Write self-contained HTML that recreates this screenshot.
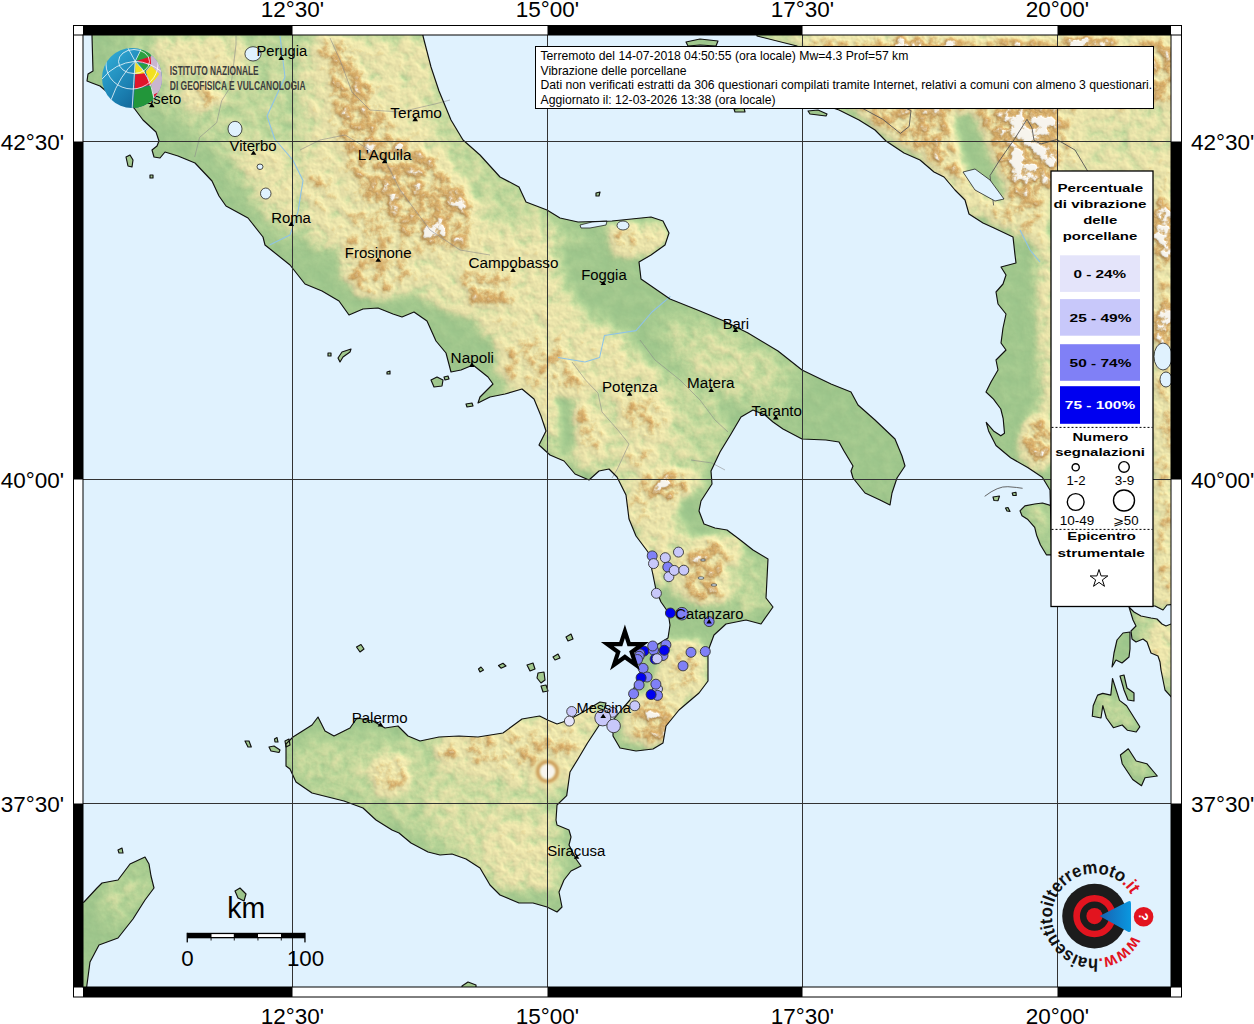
<!DOCTYPE html>
<html><head><meta charset="utf-8">
<style>
html,body{margin:0;padding:0;background:#fff;width:1254px;height:1024px;overflow:hidden;}
svg{display:block;font-family:"Liberation Sans",sans-serif;}
</style></head>
<body>
<svg width="1254" height="1024" viewBox="0 0 1254 1024">
<defs>
<clipPath id="landclip">
<polygon points="92,30 92,36 93,71 88,74 87,81 92,83 100,86 112,96 125,103 134,108 143,120 156,132 159,141 157,146 152,150 154,157 160,158 165,152 178,156 195,163 212,181 219,196 226,206 248,218 263,237 265,245 290,265 305,284 322,291 339,301 349,315 363,309 378,308 393,314 402,317 414,312 427,321 436,341 446,353 451,372 461,370 473,365 488,377 493,384 480,397 478,403 490,397 505,394 522,389 534,399 541,416 546,431 539,445 550,455 564,461 575,474 589,480 599,471 609,469 617,477 626,495 629,519 636,536 648,552 653,575 656,590 661,602 668,612 670,625 668,638 655,646 643,652 640,660 640,673 634,688 630,700 623,708 613,720 613,736 620,748 636,751 653,749 663,743 666,726 679,710 699,693 708,681 708,651 714,635 726,624 746,620 761,624 773,607 766,598 768,559 753,550 739,539 727,530 715,528 704,524 699,511 701,501 712,484 711,471 720,452 731,434 741,417 753,410 765,415 773,422 783,429 802,439 826,440 839,442 844,451 853,466 851,471 853,478 865,493 880,500 890,505 892,493 897,478 905,466 902,456 895,439 875,420 858,405 851,392 831,384 802,370 778,351 748,333 724,321 700,311 670,299 641,279 639,262 651,255 665,245 669,233 663,221 651,217 612,221 578,222 560,218 547,210 526,202 519,187 500,177 480,155 463,140 451,120 439,91 431,67 423,36 422,30"/>
<polygon points="286,744 293,737 312,725 318,717 325,731 334,736 350,728 357,718 373,721 385,728 398,726 408,736 420,741 439,737 459,736 478,737 503,733 522,719 539.6,716 547.6,720 557,724 566.7,720.7 579.5,714 600,702 606,703 600,724 587.5,743 578,759 570,772 566.7,795.7 557,805 556,820 557,825 569,830 571,837 569,845 576,859 581,866 571,871 564,880 559,892 562,907 557,912 547,907 533,903 519,903 500,895 490,885 480,868 466,859 452,854 440,855 428,852 411,843 399,833 392,830 376,820 363,808 344,801 312,793 296,782 290,769 286,766"/>
<polygon points="757,30 757,36 797,46 815,70 833,108 839,110 859,120 875,130 886,141 904,153 920,160 934,172 944,177 955,190 965,200 969,214 983,223 994,228 1013,237 1015,255 1016,263 1001,267 1006,275 1003,284 996,292 998,304 1006,314 1003,328 1001,343 1006,350 996,360 998,370 991,382 986,392 993.5,399.2 1000.8,409 1003.2,418.7 1004.5,433.3 1000.8,435.8 993.5,430.9 986.2,422.4 988.6,430.9 996,445.5 1010.6,457.8 1027.7,467.5 1042.3,477.3 1050,490 1052,560 1052,606 1155,606 1163,610 1167,605 1176,604 1176,30"/>
<polygon points="1129,607 1134,612 1141,616 1151,618 1157,619 1162,624 1166,626 1176,622 1176,702 1165,690 1161,670 1160,662 1158,656 1151,653 1147,642 1143,639 1136,642 1132,639 1131,631 1136,626 1133,620"/>
<polygon points="78,904 84,902 97,888 102,883 118,880 130,864 145,857 149,864 151,876 154,888 145,900 133,919 118,938 99,945 90,962 86,992 78,992"/>
<polygon points="126,157 130,155 133,160 132,167 128,166"/>
<polygon points="150,175 153,175 153,178 150,178"/>
<polygon points="338,358 342,352 351,349 350,352 343,357 340,362"/>
<polygon points="387,372 390,371 390,374 387,374"/>
<polygon points="431,380 437,377 443,380 442,386 434,387"/>
<polygon points="466,404 472,403 473,406 467,407"/>
<polygon points="566,637 571,634 573,639 568,641"/>
<polygon points="553,657 558,654 560,658 555,660"/>
<polygon points="527,665 533,663 535,669 530,671"/>
<polygon points="538,673 544,672 545,680 541,683 537,678"/>
<polygon points="541,686 546,685 548,691 543,692"/>
<polygon points="285,741 289,739 290,745 286,747"/>
<polygon points="235,891 240,888 246,894 244,901 238,898"/>
<polygon points="462,986 468,982 476,985 476,992 462,992"/>
<polygon points="596,193 600,192 599,196 596,196"/>
<polygon points="1020,510.8 1024.9,505.9 1034.7,504 1042.5,503 1052,505.9 1052,554.8 1046.4,554.8 1040.5,545 1036.6,535.2 1034.7,527.4 1027.9,519.6 1022,515.7"/>
<polygon points="1123,633 1130,632 1130,649 1129,657 1122,663 1116,660 1112,667 1114,653 1117,640"/>
<polygon points="1112.5,678.5 1119.5,700.4 1126.6,705.7 1139.8,726.8 1136.2,732 1127.5,730.3 1122.2,725 1113.4,727.7 1106.4,718 1102.8,705.7 1101,718 1092.3,716.2 1093.2,705.7 1097.6,695.1 1102.8,693.4 1110.8,695.1"/>
<polygon points="1120,676 1124,675 1127,688 1134,693 1134,701 1128,700 1124,690"/>
<polygon points="1120.4,755 1128.3,748.8 1136.2,761 1146.8,763.7 1157.3,776 1145,777.8 1141.5,785.7 1132.7,779.5 1122.2,763.7"/>
<polygon points="686,42 700,39 718,41 716,46 700,45 688,46"/>
<polygon points="118,850 122,848 123,853 119,853"/>
<polygon points="328,353 331,353 331,356 328,356"/>
<polygon points="444,377 448,376 449,379 445,380"/>
<polygon points="245,741 249,741 251.3,747 248,747"/>
<polygon points="356.5,647 361,644.5 364,649 360,652"/>
<polygon points="478.5,669 481,667 483.5,670 480,672"/>
<polygon points="498.5,665.5 503,663.3 506,666 501,668.2"/>
<polygon points="274.5,739 277,737.5 278,742 275,742"/>
<polygon points="269,747 274,746 280,750 279,752.5 271,751"/>
<polygon points="993,497 999.5,496 998,500.7 994,500.5"/>
<polygon points="1012.2,493 1016,492.3 1016.2,495.5 1013,495.5"/>
<polygon points="1005.5,508 1008,507.5 1010,511.5 1007,511"/>
<polygon points="734,109 744,108 745,112 735,112"/>
<polygon points="808,111 818,110 827,114 826,116 810,114"/>
</clipPath>
<filter id="b1" x="-50%" y="-50%" width="200%" height="200%" color-interpolation-filters="sRGB"><feGaussianBlur stdDeviation="1"/></filter>
<filter id="b2" x="-50%" y="-50%" width="200%" height="200%" color-interpolation-filters="sRGB"><feGaussianBlur stdDeviation="2"/></filter>
<filter id="b3" x="-50%" y="-50%" width="200%" height="200%" color-interpolation-filters="sRGB"><feGaussianBlur stdDeviation="3"/></filter>
<filter id="b4" x="-50%" y="-50%" width="200%" height="200%" color-interpolation-filters="sRGB"><feGaussianBlur stdDeviation="4"/></filter>
<filter id="b5" x="-50%" y="-50%" width="200%" height="200%" color-interpolation-filters="sRGB"><feGaussianBlur stdDeviation="5"/></filter>
<filter id="b6" x="-50%" y="-50%" width="200%" height="200%" color-interpolation-filters="sRGB"><feGaussianBlur stdDeviation="6"/></filter>
<filter id="b7" x="-50%" y="-50%" width="200%" height="200%" color-interpolation-filters="sRGB"><feGaussianBlur stdDeviation="7"/></filter>
<filter id="b8" x="-50%" y="-50%" width="200%" height="200%" color-interpolation-filters="sRGB"><feGaussianBlur stdDeviation="8"/></filter>
<filter id="b10" x="-50%" y="-50%" width="200%" height="200%" color-interpolation-filters="sRGB"><feGaussianBlur stdDeviation="10"/></filter>
<filter id="b12" x="-50%" y="-50%" width="200%" height="200%" color-interpolation-filters="sRGB"><feGaussianBlur stdDeviation="12"/></filter>
<filter id="b15" x="-50%" y="-50%" width="200%" height="200%" color-interpolation-filters="sRGB"><feGaussianBlur stdDeviation="15"/></filter>
<filter id="hyp" filterUnits="userSpaceOnUse" x="83" y="35" width="1088" height="952" color-interpolation-filters="sRGB">
<feTurbulence type="fractalNoise" baseFrequency="0.085" numOctaves="4" seed="5" result="n0"/>
<feColorMatrix in="n0" type="matrix" values="1 0 0 0 0 1 0 0 0 0 1 0 0 0 0 0 0 0 0 1" result="n"/>
<feComposite in="SourceGraphic" in2="n" operator="arithmetic" k1="1.2" k2="0.4" k3="0" k4="0" result="e"/>
<feColorMatrix in="e" type="matrix" values="0 0 0 0 1 0 0 0 0 1 0 0 0 0 1 1 0 0 0 0" result="ea"/>
<feDiffuseLighting in="ea" surfaceScale="3" diffuseConstant="1" lighting-color="#fff" result="sh"><feDistantLight azimuth="315" elevation="45"/></feDiffuseLighting>
<feComponentTransfer in="e"><feFuncR type="table" tableValues="0.592 0.620 0.690 0.784 0.867 0.922 0.925 0.902 0.859 0.820 0.851 0.969"/><feFuncG type="table" tableValues="0.761 0.776 0.816 0.855 0.878 0.894 0.898 0.839 0.733 0.651 0.733 0.957"/><feFuncB type="table" tableValues="0.541 0.549 0.580 0.620 0.651 0.671 0.675 0.596 0.482 0.384 0.533 0.933"/><feFuncA type="linear" slope="0" intercept="1"/></feComponentTransfer>
<feComposite in2="sh" operator="arithmetic" k1="0.32" k2="0.774" k3="0" k4="0" result="c2"/>
<feColorMatrix in="c2" type="matrix" values="1 0 0 0 0 0 1 0 0 0 0 0 1 0 0 0 0 0 0 1"/>
</filter>
<clipPath id="mapclip"><rect x="83" y="35" width="1088" height="952"/></clipPath>
</defs>
<rect width="1254" height="1024" fill="#fff"/>
<g clip-path="url(#mapclip)">
<rect x="83" y="35" width="1088" height="952" fill="#e0f2fe"/>
<g fill="#a9cf95">
<polygon points="92,30 92,36 93,71 88,74 87,81 92,83 100,86 112,96 125,103 134,108 143,120 156,132 159,141 157,146 152,150 154,157 160,158 165,152 178,156 195,163 212,181 219,196 226,206 248,218 263,237 265,245 290,265 305,284 322,291 339,301 349,315 363,309 378,308 393,314 402,317 414,312 427,321 436,341 446,353 451,372 461,370 473,365 488,377 493,384 480,397 478,403 490,397 505,394 522,389 534,399 541,416 546,431 539,445 550,455 564,461 575,474 589,480 599,471 609,469 617,477 626,495 629,519 636,536 648,552 653,575 656,590 661,602 668,612 670,625 668,638 655,646 643,652 640,660 640,673 634,688 630,700 623,708 613,720 613,736 620,748 636,751 653,749 663,743 666,726 679,710 699,693 708,681 708,651 714,635 726,624 746,620 761,624 773,607 766,598 768,559 753,550 739,539 727,530 715,528 704,524 699,511 701,501 712,484 711,471 720,452 731,434 741,417 753,410 765,415 773,422 783,429 802,439 826,440 839,442 844,451 853,466 851,471 853,478 865,493 880,500 890,505 892,493 897,478 905,466 902,456 895,439 875,420 858,405 851,392 831,384 802,370 778,351 748,333 724,321 700,311 670,299 641,279 639,262 651,255 665,245 669,233 663,221 651,217 612,221 578,222 560,218 547,210 526,202 519,187 500,177 480,155 463,140 451,120 439,91 431,67 423,36 422,30"/>
<polygon points="286,744 293,737 312,725 318,717 325,731 334,736 350,728 357,718 373,721 385,728 398,726 408,736 420,741 439,737 459,736 478,737 503,733 522,719 539.6,716 547.6,720 557,724 566.7,720.7 579.5,714 600,702 606,703 600,724 587.5,743 578,759 570,772 566.7,795.7 557,805 556,820 557,825 569,830 571,837 569,845 576,859 581,866 571,871 564,880 559,892 562,907 557,912 547,907 533,903 519,903 500,895 490,885 480,868 466,859 452,854 440,855 428,852 411,843 399,833 392,830 376,820 363,808 344,801 312,793 296,782 290,769 286,766"/>
<polygon points="757,30 757,36 797,46 815,70 833,108 839,110 859,120 875,130 886,141 904,153 920,160 934,172 944,177 955,190 965,200 969,214 983,223 994,228 1013,237 1015,255 1016,263 1001,267 1006,275 1003,284 996,292 998,304 1006,314 1003,328 1001,343 1006,350 996,360 998,370 991,382 986,392 993.5,399.2 1000.8,409 1003.2,418.7 1004.5,433.3 1000.8,435.8 993.5,430.9 986.2,422.4 988.6,430.9 996,445.5 1010.6,457.8 1027.7,467.5 1042.3,477.3 1050,490 1052,560 1052,606 1155,606 1163,610 1167,605 1176,604 1176,30"/>
<polygon points="1129,607 1134,612 1141,616 1151,618 1157,619 1162,624 1166,626 1176,622 1176,702 1165,690 1161,670 1160,662 1158,656 1151,653 1147,642 1143,639 1136,642 1132,639 1131,631 1136,626 1133,620"/>
<polygon points="78,904 84,902 97,888 102,883 118,880 130,864 145,857 149,864 151,876 154,888 145,900 133,919 118,938 99,945 90,962 86,992 78,992"/>
<polygon points="126,157 130,155 133,160 132,167 128,166"/>
<polygon points="150,175 153,175 153,178 150,178"/>
<polygon points="338,358 342,352 351,349 350,352 343,357 340,362"/>
<polygon points="387,372 390,371 390,374 387,374"/>
<polygon points="431,380 437,377 443,380 442,386 434,387"/>
<polygon points="466,404 472,403 473,406 467,407"/>
<polygon points="566,637 571,634 573,639 568,641"/>
<polygon points="553,657 558,654 560,658 555,660"/>
<polygon points="527,665 533,663 535,669 530,671"/>
<polygon points="538,673 544,672 545,680 541,683 537,678"/>
<polygon points="541,686 546,685 548,691 543,692"/>
<polygon points="285,741 289,739 290,745 286,747"/>
<polygon points="235,891 240,888 246,894 244,901 238,898"/>
<polygon points="462,986 468,982 476,985 476,992 462,992"/>
<polygon points="596,193 600,192 599,196 596,196"/>
<polygon points="1020,510.8 1024.9,505.9 1034.7,504 1042.5,503 1052,505.9 1052,554.8 1046.4,554.8 1040.5,545 1036.6,535.2 1034.7,527.4 1027.9,519.6 1022,515.7"/>
<polygon points="1123,633 1130,632 1130,649 1129,657 1122,663 1116,660 1112,667 1114,653 1117,640"/>
<polygon points="1112.5,678.5 1119.5,700.4 1126.6,705.7 1139.8,726.8 1136.2,732 1127.5,730.3 1122.2,725 1113.4,727.7 1106.4,718 1102.8,705.7 1101,718 1092.3,716.2 1093.2,705.7 1097.6,695.1 1102.8,693.4 1110.8,695.1"/>
<polygon points="1120,676 1124,675 1127,688 1134,693 1134,701 1128,700 1124,690"/>
<polygon points="1120.4,755 1128.3,748.8 1136.2,761 1146.8,763.7 1157.3,776 1145,777.8 1141.5,785.7 1132.7,779.5 1122.2,763.7"/>
<polygon points="686,42 700,39 718,41 716,46 700,45 688,46"/>
<polygon points="118,850 122,848 123,853 119,853"/>
<polygon points="328,353 331,353 331,356 328,356"/>
<polygon points="444,377 448,376 449,379 445,380"/>
<polygon points="245,741 249,741 251.3,747 248,747"/>
<polygon points="356.5,647 361,644.5 364,649 360,652"/>
<polygon points="478.5,669 481,667 483.5,670 480,672"/>
<polygon points="498.5,665.5 503,663.3 506,666 501,668.2"/>
<polygon points="274.5,739 277,737.5 278,742 275,742"/>
<polygon points="269,747 274,746 280,750 279,752.5 271,751"/>
<polygon points="993,497 999.5,496 998,500.7 994,500.5"/>
<polygon points="1012.2,493 1016,492.3 1016.2,495.5 1013,495.5"/>
<polygon points="1005.5,508 1008,507.5 1010,511.5 1007,511"/>
<polygon points="734,109 744,108 745,112 735,112"/>
<polygon points="808,111 818,110 827,114 826,116 810,114"/>
</g>
<g clip-path="url(#landclip)">
<g filter="url(#hyp)"><rect x="83" y="35" width="1088" height="952" fill="#1a1a1a"/><polygon fill="rgb(64,64,64)" filter="url(#b10)" points="120,40 292,36 300,120 300,250 265,225 230,170 190,130 150,105 125,80"/>
<polygon fill="rgb(115,115,115)" filter="url(#b6)" points="150,40 240,38 250,70 220,85 170,75"/>
<ellipse fill="rgb(158,158,158)" filter="url(#b4)" cx="202.0" cy="97.0" rx="20.0" ry="13.0"/>
<polygon fill="rgb(115,115,115)" filter="url(#b8)" points="230,140 292,150 300,230 270,215 245,175"/>
<polygon fill="rgb(115,115,115)" filter="url(#b8)" points="300,36 430,36 445,95 470,150 505,190 545,220 580,245 605,310 640,360 690,392 722,445 718,500 682,545 645,522 612,475 565,462 522,412 500,380 468,338 430,302 372,272 335,238 312,185 302,120"/>
<polygon fill="rgb(64,64,64)" filter="url(#b10)" points="430,50 470,130 520,190 560,230 500,230 460,190 430,120"/>
<polygon fill="rgb(158,158,158)" filter="url(#b5)" points="318,40 352,40 366,88 394,132 442,158 474,200 476,252 440,256 398,240 360,206 344,162 328,100"/>
<polygon fill="rgb(186,186,186)" filter="url(#b4)" points="330,45 348,45 360,88 388,130 435,160 466,205 466,245 440,245 402,230 368,198 350,160 336,100"/>
<ellipse fill="rgb(245,245,245)" filter="url(#b3)" cx="367.0" cy="88.0" rx="4.0" ry="6.0"/>
<ellipse fill="rgb(245,245,245)" filter="url(#b3)" cx="383.0" cy="117.0" rx="3.0" ry="4.0"/>
<ellipse fill="rgb(245,245,245)" filter="url(#b3)" cx="396.0" cy="148.0" rx="8.0" ry="5.0"/>
<ellipse fill="rgb(245,245,245)" filter="url(#b3)" cx="388.0" cy="185.0" rx="6.0" ry="6.0"/>
<ellipse fill="rgb(245,245,245)" filter="url(#b3)" cx="457.0" cy="198.0" rx="5.0" ry="10.0"/>
<ellipse fill="rgb(245,245,245)" filter="url(#b3)" cx="433.0" cy="232.0" rx="13.0" ry="8.0"/>
<polygon fill="rgb(115,115,115)" filter="url(#b6)" points="298,140 340,150 352,240 322,255 300,225"/>
<ellipse fill="rgb(158,158,158)" filter="url(#b4)" cx="320.0" cy="186.5" rx="12.0" ry="18.5"/>
<ellipse fill="rgb(158,158,158)" filter="url(#b4)" cx="362.0" cy="231.0" rx="20.0" ry="21.0"/>
<ellipse fill="rgb(158,158,158)" filter="url(#b4)" cx="377.5" cy="264.0" rx="37.5" ry="36.0"/>
<polygon fill="rgb(158,158,158)" filter="url(#b4)" points="462,268 512,270 515,305 465,308"/>
<ellipse fill="rgb(186,186,186)" filter="url(#b3)" cx="487.5" cy="287.5" rx="17.5" ry="12.5"/>
<ellipse fill="rgb(158,158,158)" filter="url(#b4)" cx="537.5" cy="361.5" rx="37.5" ry="24.5"/>
<polygon fill="rgb(26,26,26)" filter="url(#b6)" points="424,309 470,318 497,350 490,378 450,374 430,340"/>
<polygon fill="rgb(26,26,26)" filter="url(#b8)" points="555,232 640,262 672,300 650,332 585,320 560,280"/>
<polygon fill="rgb(115,115,115)" filter="url(#b4)" points="602,226 662,222 668,242 648,258 616,258"/>
<ellipse fill="rgb(158,158,158)" filter="url(#b4)" cx="630.0" cy="239.0" rx="20.0" ry="11.0"/>
<polygon fill="rgb(64,64,64)" filter="url(#b10)" points="655,312 700,318 780,352 800,372 780,415 745,405 700,392 665,352"/>
<polygon fill="rgb(84,84,84)" filter="url(#b10)" points="680,330 740,345 770,370 750,395 700,380"/>
<polygon fill="rgb(84,84,84)" filter="url(#b8)" points="560,382 700,392 722,445 705,490 650,470 600,470 560,445"/>
<polygon fill="rgb(26,26,26)" filter="url(#b4)" points="558,393 574,395 577,430 570,457 558,450"/>
<polygon fill="rgb(158,158,158)" filter="url(#b4)" points="572,402 590,405 606,440 600,458 585,455 575,430"/>
<polygon fill="rgb(158,158,158)" filter="url(#b4)" points="615,395 650,393 672,410 665,437 640,440 620,425"/>
<ellipse fill="rgb(158,158,158)" filter="url(#b4)" cx="640.0" cy="456.5" rx="16.0" ry="10.5"/>
<ellipse fill="rgb(158,158,158)" filter="url(#b4)" cx="569.0" cy="382.5" rx="21.0" ry="12.5"/>
<ellipse fill="rgb(186,186,186)" filter="url(#b4)" cx="665.0" cy="486.5" rx="25.0" ry="18.5"/>
<ellipse fill="rgb(158,158,158)" filter="url(#b4)" cx="645.0" cy="507.0" rx="21.0" ry="19.0"/>
<ellipse fill="rgb(245,245,245)" filter="url(#b3)" cx="665.5" cy="488.0" rx="10.5" ry="8.0"/>
<polygon fill="rgb(26,26,26)" filter="url(#b5)" points="702,470 730,440 745,532 712,526"/>
<polygon fill="rgb(64,64,64)" filter="url(#b6)" points="660,380 720,400 730,450 700,470 680,420"/>
<polygon fill="rgb(115,115,115)" filter="url(#b4)" points="630,500 665,500 672,570 660,592 642,560"/>
<ellipse fill="rgb(158,158,158)" filter="url(#b3)" cx="648.0" cy="512.0" rx="12.0" ry="12.0"/>
<polygon fill="rgb(115,115,115)" filter="url(#b5)" points="668,530 742,538 748,600 700,608 670,592"/>
<ellipse fill="rgb(186,186,186)" filter="url(#b5)" cx="708.0" cy="571.0" rx="26.0" ry="31.0"/>
<polygon fill="rgb(64,64,64)" filter="url(#b6)" points="726,561 768,560 770,605 740,620 726,600"/>
<polygon fill="rgb(26,26,26)" filter="url(#b4)" points="660,603 700,610 720,626 700,640 668,636"/>
<polygon fill="rgb(115,115,115)" filter="url(#b4)" points="665,640 702,640 707,690 682,708 652,748 622,742 622,702 650,690"/>
<ellipse fill="rgb(158,158,158)" filter="url(#b4)" cx="685.0" cy="668.5" rx="17.0" ry="23.5"/>
<ellipse fill="rgb(186,186,186)" filter="url(#b4)" cx="656.0" cy="722.0" rx="26.0" ry="22.0"/>
<ellipse fill="rgb(245,245,245)" filter="url(#b2)" cx="652.0" cy="717.0" rx="8.0" ry="7.0"/>
<polygon fill="rgb(26,26,26)" filter="url(#b5)" points="678,498 706,488 716,530 692,540 676,522"/>
<polygon fill="rgb(64,64,64)" filter="url(#b10)" points="290,740 430,735 560,790 570,900 480,880 380,815 290,785"/>
<polygon fill="rgb(115,115,115)" filter="url(#b6)" points="436,732 600,706 600,730 582,768 560,792 520,790 470,780 440,770"/>
<polygon fill="rgb(158,158,158)" filter="url(#b4)" points="460,736 568,728 578,750 560,768 520,766 468,762"/>
<ellipse fill="rgb(158,158,158)" filter="url(#b4)" cx="390.0" cy="775.0" rx="20.0" ry="20.0"/>
<polygon fill="rgb(87,87,87)" filter="url(#b8)" points="420,780 540,792 552,870 500,890 440,840"/>
<polygon fill="rgb(115,115,115)" filter="url(#b6)" points="487,824 551,824 551,887 500,887"/>
<ellipse fill="rgb(158,158,158)" filter="url(#b3)" cx="449.0" cy="753.0" rx="13.0" ry="9.0"/>
<ellipse fill="rgb(245,245,245)" filter="url(#b2)" cx="449.0" cy="753.0" rx="3.0" ry="3.0"/>
<polygon fill="rgb(158,158,158)" filter="url(#b6)" points="757,36 1176,36 1176,606 1152,606 1152,170 1050,170 1045,250 1032,240 1012,236 990,222 965,196 935,170 895,148 850,108 800,52"/>
<polygon fill="rgb(186,186,186)" filter="url(#b6)" points="800,40 1176,40 1176,100 1060,108 1060,190 1010,212 965,185 905,145 855,104"/>
<polygon fill="rgb(51,51,51)" filter="url(#b4)" points="757,36 790,36 830,70 850,110 890,138 930,162 920,170 880,150 838,118 800,55"/>
<ellipse fill="rgb(245,245,245)" filter="url(#b4)" cx="1025.5" cy="125.0" rx="30.5" ry="20.0"/>
<ellipse fill="rgb(245,245,245)" filter="url(#b4)" cx="1030.5" cy="162.0" rx="25.5" ry="20.0"/>
<ellipse fill="rgb(245,245,245)" filter="url(#b4)" cx="920.0" cy="50.0" rx="40.0" ry="12.0"/>
<ellipse fill="rgb(245,245,245)" filter="url(#b4)" cx="1085.0" cy="49.0" rx="25.0" ry="11.0"/>
<ellipse fill="rgb(245,245,245)" filter="url(#b4)" cx="1164.0" cy="230.0" rx="12.0" ry="30.0"/>
<ellipse fill="rgb(245,245,245)" filter="url(#b4)" cx="1164.0" cy="322.5" rx="12.0" ry="22.5"/>
<polygon fill="rgb(97,97,97)" filter="url(#b10)" points="1075,108 1176,104 1176,170 1075,175"/>
<polygon fill="rgb(26,26,26)" filter="url(#b5)" points="951,114 972,110 997,167 1008,200 994,207 965,174 955,144"/>
<polygon fill="rgb(115,115,115)" filter="url(#b4)" points="934,174 960,180 985,215 965,214 945,195"/>
<polygon fill="rgb(26,26,26)" filter="url(#b6)" points="990,225 1035,250 1040,420 1000,440 985,300"/>
<polygon fill="rgb(115,115,115)" filter="url(#b6)" points="1035,240 1055,240 1055,420 1040,420"/>
<ellipse fill="rgb(186,186,186)" filter="url(#b4)" cx="1037.5" cy="442.5" rx="17.5" ry="27.5"/>
<polygon fill="rgb(64,64,64)" filter="url(#b5)" points="1130,610 1176,610 1176,700 1150,670"/>
<ellipse fill="rgb(115,115,115)" filter="url(#b4)" cx="1158.0" cy="652.5" rx="18.0" ry="27.5"/>
<polygon fill="rgb(64,64,64)" filter="url(#b5)" points="1095,690 1135,710 1130,730 1100,720"/>
<polygon fill="rgb(64,64,64)" filter="url(#b5)" points="1120,750 1150,765 1140,782"/>
<polygon fill="rgb(64,64,64)" filter="url(#b5)" points="1020,505 1048,505 1048,550"/>
<polygon fill="rgb(64,64,64)" filter="url(#b8)" points="100,890 140,865 148,890 110,935"/></g><circle cx="547.5" cy="771.5" r="11.5" fill="none" stroke="#ebe2a8" stroke-width="6" filter="url(#b2)"/><circle cx="547.5" cy="771.5" r="9.5" fill="none" stroke="#cfa462" stroke-width="4.5" filter="url(#b1)"/><circle cx="547.5" cy="771.5" r="7.5" fill="#f7f4ee" filter="url(#b1)"/>
</g>
<g fill="none" stroke="#8fc3e6" stroke-width="1.1" stroke-linejoin="round">
<path d="M280,36 L285,77 L267,116 L274.7,139 L292.8,160 L303,180.5 L298,211.6 L290,235 L269.5,245"/>
<path d="M670.4,296.4 L652,312 L636,330.6 L604.5,335.5 L599.6,357.5 L585,362 L558,357.5"/>
<path d="M1020,230 L1030,250 L1040,262"/>
</g>
<g fill="none" stroke="#555" stroke-width="0.9" stroke-linejoin="round">
<path d="M860,107 L882.8,119.3 L900.4,133.4 L909.2,126.4 L911,110.5 L905,108"/>
<path d="M993.6,205.4 L990,175.6 L998.8,161.5 L1014.7,138.7 L1027,119.3 L1032,128 L1034,140.4 L1041,144 L1056.8,139.5 L1075,150 L1090,175"/>
</g>
<g fill="none" stroke="#888" stroke-width="0.7" stroke-linejoin="round" opacity="0.8">
<path d="M236,36 L236,44.6 L231,86 L221.6,100.8 L216.7,122.7 L199.6,137.4 L194.7,157"/>
<path d="M330,38 L340,60 L352,92 L370,110 L400,112 L435,104 L450,100"/>
<path d="M300,150 L320,140 L345,135 L370,150 L385,160 L400,190 L430,230 L460,250 L490,255"/>
<path d="M572,362 L585.5,380 L598,393 L602,412 L618.7,431 L629,444 L617.4,469 L612,478"/>
<path d="M691,460 L712,463 L725,470"/>
<path d="M640,340 L655,360 L680,380 L700,400 L715,420 L728,432"/>
</g>
<g fill="#e0f2fe" stroke="#333" stroke-width="0.7"><ellipse cx="703" cy="560" rx="2.5" ry="1"/><ellipse cx="701" cy="578" rx="3" ry="1.2"/><ellipse cx="714" cy="585" rx="3" ry="1.1"/></g>
<path d="M984.7,496.3 Q998,486 1007.8,486.7 T1022.6,488.3" fill="none" stroke="#555" stroke-width="0.9"/>
<g fill="#e0f2fe" stroke="#222" stroke-width="0.8"><ellipse cx="253.0" cy="53.85" rx="8.100000000000009" ry="7.149999999999999"/>
<ellipse cx="235.0" cy="128.95" rx="7.0" ry="7.649999999999999"/>
<ellipse cx="260.0" cy="166.75" rx="3.0" ry="2.75"/>
<ellipse cx="265.75" cy="193.5" rx="5.25" ry="5.5"/>
<polygon points="580,225 592,222 607,221 606,225 590,228 581,228"/>
<ellipse cx="623.0" cy="225.5" rx="6.0" ry="4.5"/>
<polygon points="963,172 975,169 990,180 1004,199 995,201 975,190"/>
<ellipse cx="1163.0" cy="356.5" rx="9.0" ry="13.5"/>
<ellipse cx="1166.0" cy="379.5" rx="6.0" ry="7.5"/></g>
<g fill="none" stroke="#111" stroke-width="1.15" stroke-linejoin="round">
<polygon points="92,30 92,36 93,71 88,74 87,81 92,83 100,86 112,96 125,103 134,108 143,120 156,132 159,141 157,146 152,150 154,157 160,158 165,152 178,156 195,163 212,181 219,196 226,206 248,218 263,237 265,245 290,265 305,284 322,291 339,301 349,315 363,309 378,308 393,314 402,317 414,312 427,321 436,341 446,353 451,372 461,370 473,365 488,377 493,384 480,397 478,403 490,397 505,394 522,389 534,399 541,416 546,431 539,445 550,455 564,461 575,474 589,480 599,471 609,469 617,477 626,495 629,519 636,536 648,552 653,575 656,590 661,602 668,612 670,625 668,638 655,646 643,652 640,660 640,673 634,688 630,700 623,708 613,720 613,736 620,748 636,751 653,749 663,743 666,726 679,710 699,693 708,681 708,651 714,635 726,624 746,620 761,624 773,607 766,598 768,559 753,550 739,539 727,530 715,528 704,524 699,511 701,501 712,484 711,471 720,452 731,434 741,417 753,410 765,415 773,422 783,429 802,439 826,440 839,442 844,451 853,466 851,471 853,478 865,493 880,500 890,505 892,493 897,478 905,466 902,456 895,439 875,420 858,405 851,392 831,384 802,370 778,351 748,333 724,321 700,311 670,299 641,279 639,262 651,255 665,245 669,233 663,221 651,217 612,221 578,222 560,218 547,210 526,202 519,187 500,177 480,155 463,140 451,120 439,91 431,67 423,36 422,30"/>
<polygon points="286,744 293,737 312,725 318,717 325,731 334,736 350,728 357,718 373,721 385,728 398,726 408,736 420,741 439,737 459,736 478,737 503,733 522,719 539.6,716 547.6,720 557,724 566.7,720.7 579.5,714 600,702 606,703 600,724 587.5,743 578,759 570,772 566.7,795.7 557,805 556,820 557,825 569,830 571,837 569,845 576,859 581,866 571,871 564,880 559,892 562,907 557,912 547,907 533,903 519,903 500,895 490,885 480,868 466,859 452,854 440,855 428,852 411,843 399,833 392,830 376,820 363,808 344,801 312,793 296,782 290,769 286,766"/>
<polygon points="757,30 757,36 797,46 815,70 833,108 839,110 859,120 875,130 886,141 904,153 920,160 934,172 944,177 955,190 965,200 969,214 983,223 994,228 1013,237 1015,255 1016,263 1001,267 1006,275 1003,284 996,292 998,304 1006,314 1003,328 1001,343 1006,350 996,360 998,370 991,382 986,392 993.5,399.2 1000.8,409 1003.2,418.7 1004.5,433.3 1000.8,435.8 993.5,430.9 986.2,422.4 988.6,430.9 996,445.5 1010.6,457.8 1027.7,467.5 1042.3,477.3 1050,490 1052,560 1052,606 1155,606 1163,610 1167,605 1176,604 1176,30"/>
<polygon points="1129,607 1134,612 1141,616 1151,618 1157,619 1162,624 1166,626 1176,622 1176,702 1165,690 1161,670 1160,662 1158,656 1151,653 1147,642 1143,639 1136,642 1132,639 1131,631 1136,626 1133,620"/>
<polygon points="78,904 84,902 97,888 102,883 118,880 130,864 145,857 149,864 151,876 154,888 145,900 133,919 118,938 99,945 90,962 86,992 78,992"/>
<polygon points="126,157 130,155 133,160 132,167 128,166"/>
<polygon points="150,175 153,175 153,178 150,178"/>
<polygon points="338,358 342,352 351,349 350,352 343,357 340,362"/>
<polygon points="387,372 390,371 390,374 387,374"/>
<polygon points="431,380 437,377 443,380 442,386 434,387"/>
<polygon points="466,404 472,403 473,406 467,407"/>
<polygon points="566,637 571,634 573,639 568,641"/>
<polygon points="553,657 558,654 560,658 555,660"/>
<polygon points="527,665 533,663 535,669 530,671"/>
<polygon points="538,673 544,672 545,680 541,683 537,678"/>
<polygon points="541,686 546,685 548,691 543,692"/>
<polygon points="285,741 289,739 290,745 286,747"/>
<polygon points="235,891 240,888 246,894 244,901 238,898"/>
<polygon points="462,986 468,982 476,985 476,992 462,992"/>
<polygon points="596,193 600,192 599,196 596,196"/>
<polygon points="1020,510.8 1024.9,505.9 1034.7,504 1042.5,503 1052,505.9 1052,554.8 1046.4,554.8 1040.5,545 1036.6,535.2 1034.7,527.4 1027.9,519.6 1022,515.7"/>
<polygon points="1123,633 1130,632 1130,649 1129,657 1122,663 1116,660 1112,667 1114,653 1117,640"/>
<polygon points="1112.5,678.5 1119.5,700.4 1126.6,705.7 1139.8,726.8 1136.2,732 1127.5,730.3 1122.2,725 1113.4,727.7 1106.4,718 1102.8,705.7 1101,718 1092.3,716.2 1093.2,705.7 1097.6,695.1 1102.8,693.4 1110.8,695.1"/>
<polygon points="1120,676 1124,675 1127,688 1134,693 1134,701 1128,700 1124,690"/>
<polygon points="1120.4,755 1128.3,748.8 1136.2,761 1146.8,763.7 1157.3,776 1145,777.8 1141.5,785.7 1132.7,779.5 1122.2,763.7"/>
<polygon points="686,42 700,39 718,41 716,46 700,45 688,46"/>
<polygon points="118,850 122,848 123,853 119,853"/>
<polygon points="328,353 331,353 331,356 328,356"/>
<polygon points="444,377 448,376 449,379 445,380"/>
<polygon points="245,741 249,741 251.3,747 248,747"/>
<polygon points="356.5,647 361,644.5 364,649 360,652"/>
<polygon points="478.5,669 481,667 483.5,670 480,672"/>
<polygon points="498.5,665.5 503,663.3 506,666 501,668.2"/>
<polygon points="274.5,739 277,737.5 278,742 275,742"/>
<polygon points="269,747 274,746 280,750 279,752.5 271,751"/>
<polygon points="993,497 999.5,496 998,500.7 994,500.5"/>
<polygon points="1012.2,493 1016,492.3 1016.2,495.5 1013,495.5"/>
<polygon points="1005.5,508 1008,507.5 1010,511.5 1007,511"/>
<polygon points="734,109 744,108 745,112 735,112"/>
<polygon points="808,111 818,110 827,114 826,116 810,114"/>
</g>
<!-- grid -->
<g stroke="#333" stroke-width="1">
<line x1="292.5" y1="35" x2="292.5" y2="987"/>
<line x1="547.5" y1="35" x2="547.5" y2="987"/>
<line x1="802.5" y1="35" x2="802.5" y2="987"/>
<line x1="1057.5" y1="35" x2="1057.5" y2="987"/>
<line x1="83" y1="141.5" x2="1171" y2="141.5"/>
<line x1="83" y1="479.5" x2="1171" y2="479.5"/>
<line x1="83" y1="803.5" x2="1171" y2="803.5"/>
</g>
</g>

<!-- circles -->
<g stroke="#333" stroke-width="0.9">
<circle cx="652.2" cy="555.9" r="5" fill="#8080f6"/>
<circle cx="653.5" cy="563.6" r="5" fill="#c8c8fa"/>
<circle cx="665.3" cy="557.7" r="5" fill="#c8c8fa"/>
<circle cx="678.5" cy="552.1" r="5" fill="#c8c8fa"/>
<circle cx="667.8" cy="567.1" r="5" fill="#8080f6"/>
<circle cx="668.9" cy="576.7" r="5" fill="#c8c8fa"/>
<circle cx="674.2" cy="570.4" r="5" fill="#c8c8fa"/>
<circle cx="683.8" cy="570.2" r="5" fill="#c8c8fa"/>
<circle cx="656.4" cy="593.3" r="5" fill="#c8c8fa"/>
<circle cx="670.4" cy="613" r="5" fill="#0000f0"/>
<circle cx="681.9" cy="613.7" r="6.3" fill="#8080f6"/>
<circle cx="709.1" cy="621.6" r="5" fill="#8080f6"/>
<circle cx="643.9" cy="651.1" r="5" fill="#0000f0"/>
<circle cx="639.9" cy="653.9" r="5" fill="#8080f6"/>
<circle cx="639.1" cy="656.3" r="5" fill="#8080f6"/>
<circle cx="637.5" cy="659.5" r="5" fill="#8080f6"/>
<circle cx="653.5" cy="650" r="5" fill="#8080f6"/>
<circle cx="652.7" cy="646" r="5" fill="#8080f6"/>
<circle cx="665.9" cy="644.8" r="5" fill="#8080f6"/>
<circle cx="663" cy="655.5" r="5" fill="#8080f6"/>
<circle cx="664.3" cy="650.3" r="5" fill="#0000f0"/>
<circle cx="655.1" cy="659.1" r="5" fill="#0000f0"/>
<circle cx="657.1" cy="658.7" r="5" fill="#c8c8fa"/>
<circle cx="691" cy="652.3" r="5" fill="#8080f6"/>
<circle cx="705.3" cy="651.5" r="5" fill="#8080f6"/>
<circle cx="683" cy="665.9" r="5" fill="#8080f6"/>
<circle cx="643.1" cy="668.3" r="5" fill="#8080f6"/>
<circle cx="647.1" cy="677" r="5" fill="#8080f6"/>
<circle cx="641.1" cy="677.8" r="5" fill="#0000f0"/>
<circle cx="639.1" cy="685" r="5" fill="#8080f6"/>
<circle cx="657.5" cy="689" r="5" fill="#c8c8fa"/>
<circle cx="655.9" cy="684.2" r="5" fill="#8080f6"/>
<circle cx="657.5" cy="695.4" r="5" fill="#8080f6"/>
<circle cx="651.1" cy="694.6" r="5" fill="#0000f0"/>
<circle cx="633.6" cy="693.8" r="5" fill="#8080f6"/>
<circle cx="634.8" cy="705.8" r="5" fill="#c8c8fa"/>
<circle cx="571.7" cy="711.5" r="5" fill="#c8c8fa"/>
<circle cx="569.4" cy="721.1" r="5" fill="#e4e4fa"/>
<circle cx="612.4" cy="712.3" r="5" fill="#c8c8fa"/>
<circle cx="602.8" cy="717.9" r="8" fill="#c8c8fa"/>
<circle cx="613.6" cy="725.9" r="6.8" fill="#c8c8fa"/>
</g>
<!-- epicenter star -->
<path d="M624.90,631.40 L629.05,644.18 L642.49,644.18 L631.62,652.08 L635.77,664.87 L624.90,656.97 L614.03,664.87 L618.18,652.08 L607.31,644.18 L620.75,644.18 Z" fill="none" stroke="#000" stroke-width="4.2" stroke-linejoin="miter"/>
<!-- labels -->
<g font-size="14.7" fill="#000">
<text x="256.4" y="56.3" textLength="50.7" lengthAdjust="spacingAndGlyphs">Perugia</text>
<text x="121.5" y="103.7">Grosseto</text>
<text x="390.3" y="117.5" textLength="51.7" lengthAdjust="spacingAndGlyphs">Teramo</text>
<text x="229.6" y="151" textLength="46.9" lengthAdjust="spacingAndGlyphs">Viterbo</text>
<text x="357.8" y="159.6" textLength="53.6" lengthAdjust="spacingAndGlyphs">L’Aquila</text>
<text x="271.2" y="222.7" textLength="39.7" lengthAdjust="spacingAndGlyphs">Roma</text>
<text x="344.8" y="257.6" textLength="66.7" lengthAdjust="spacingAndGlyphs">Frosinone</text>
<text x="468.5" y="268.2" textLength="90" lengthAdjust="spacingAndGlyphs">Campobasso</text>
<text x="581.2" y="280.3" textLength="45.5" lengthAdjust="spacingAndGlyphs">Foggia</text>
<text x="722.7" y="328.8" textLength="26.4" lengthAdjust="spacingAndGlyphs">Bari</text>
<text x="450.6" y="362.7" textLength="43.4" lengthAdjust="spacingAndGlyphs">Napoli</text>
<text x="602" y="391.5" textLength="55.6" lengthAdjust="spacingAndGlyphs">Potenza</text>
<text x="687" y="387.9" textLength="47.5" lengthAdjust="spacingAndGlyphs">Matera</text>
<text x="751.5" y="415.8" textLength="50.5" lengthAdjust="spacingAndGlyphs">Taranto</text>
<text x="675.3" y="619.4" textLength="68.2" lengthAdjust="spacingAndGlyphs">Catanzaro</text>
<text x="576.5" y="713.3" textLength="54.3" lengthAdjust="spacingAndGlyphs">Messina</text>
<text x="351.8" y="723" textLength="55.8" lengthAdjust="spacingAndGlyphs">Palermo</text>
<text x="547.3" y="856" textLength="58.1" lengthAdjust="spacingAndGlyphs">Siracusa</text>
</g>
<g fill="#000">
<path d="M281.2,55.6 L284.0,60.0 L278.4,60.0 Z"/>
<path d="M151.8,102.8 L154.6,107.2 L149.0,107.2 Z"/>
<path d="M415.2,116.8 L418.0,121.2 L412.4,121.2 Z"/>
<path d="M253.5,150.4 L256.3,154.8 L250.7,154.8 Z"/>
<path d="M384.6,158.9 L387.4,163.3 L381.8,163.3 Z"/>
<path d="M291.2,221.6 L294.0,226.0 L288.4,226.0 Z"/>
<path d="M378.2,257.4 L381.0,261.8 L375.4,261.8 Z"/>
<path d="M513.0,267.7 L515.8,272.1 L510.2,272.1 Z"/>
<path d="M603.3,280.7 L606.1,285.1 L600.5,285.1 Z"/>
<path d="M735.5,327.7 L738.3,332.1 L732.7,332.1 Z"/>
<path d="M471.8,362.6 L474.6,367.0 L469.0,367.0 Z"/>
<path d="M629.6,391.4 L632.4,395.8 L626.8,395.8 Z"/>
<path d="M711.2,387.7 L714.0,392.1 L708.4,392.1 Z"/>
<path d="M775.8,415.0 L778.6,419.4 L773.0,419.4 Z"/>
<path d="M709.1,619.0 L711.9,623.4 L706.3,623.4 Z"/>
<path d="M603.2,713.7 L606.0,718.1 L600.4,718.1 Z"/>
<path d="M380.5,722.1 L383.3,726.5 L377.7,726.5 Z"/>
<path d="M576.6,854.4 L579.4,858.8 L573.8,858.8 Z"/>
</g>
<!-- scale bar -->
<g>
<rect x="187.2" y="932.8" width="117.8" height="5.5" fill="#000"/>
<rect x="211.5" y="934.1" width="22.3" height="2.9" fill="#fff"/>
<rect x="258" y="934.1" width="23" height="2.9" fill="#fff"/>
<rect x="186.6" y="932.8" width="1.3" height="9.6" fill="#000"/>
<rect x="304.3" y="932.8" width="1.3" height="9.6" fill="#000"/>
<g fill="#000"><rect x="210.6" y="937" width="0.9" height="3.5"/><rect x="233.8" y="937" width="0.9" height="3.5"/><rect x="257.5" y="937" width="0.9" height="3.5"/><rect x="280.8" y="937" width="0.9" height="3.5"/></g>
<text x="246.2" y="917.9" font-size="29" text-anchor="middle" textLength="37.9" lengthAdjust="spacingAndGlyphs">km</text>
<text x="187.5" y="966" font-size="22.3" text-anchor="middle">0</text>
<text x="305.5" y="966" font-size="22.3" text-anchor="middle">100</text>
</g>
<!-- info box -->
<rect x="535.5" y="46.5" width="618" height="62" fill="#fff" stroke="#000" stroke-width="1"/>
<g font-size="12.2" fill="#000">
<text x="540.5" y="60">Terremoto del 14-07-2018 04:50:55 (ora locale) Mw=4.3 Prof=57 km</text>
<text x="540.5" y="74.6">Vibrazione delle porcellane</text>
<text x="540.5" y="89.4">Dati non verificati estratti da 306 questionari compilati tramite Internet, relativi a comuni con almeno 3 questionari.</text>
<text x="540.5" y="104">Aggiornato il: 12-03-2026 13:38 (ora locale)</text>
</g>
<!-- legend -->
<g>
<rect x="1051" y="171" width="102" height="435.5" fill="#fff" stroke="#000" stroke-width="1.3"/>
<g font-size="11.8" font-weight="bold" text-anchor="middle" fill="#000">
<text x="1100.3" y="192" textLength="85.7" lengthAdjust="spacingAndGlyphs">Percentuale</text>
<text x="1100" y="207.9" textLength="92.9" lengthAdjust="spacingAndGlyphs">di vibrazione</text>
<text x="1100.2" y="223.7" textLength="34.1" lengthAdjust="spacingAndGlyphs">delle</text>
<text x="1100" y="239.5" textLength="74.5" lengthAdjust="spacingAndGlyphs">porcellane</text>
</g>
<rect x="1060" y="255.3" width="80" height="36.6" fill="#e4e4fa"/>
<rect x="1060" y="299.1" width="80" height="36.6" fill="#c8c8fa"/>
<rect x="1060" y="344.2" width="80" height="36.6" fill="#8080f6"/>
<rect x="1060" y="386.2" width="80" height="37.6" fill="#0000f0"/>
<g font-size="11.8" font-weight="bold" text-anchor="middle">
<text x="1099.8" y="277.8" textLength="52.7" lengthAdjust="spacingAndGlyphs">0 - 24%</text>
<text x="1100.5" y="321.9" textLength="61.8" lengthAdjust="spacingAndGlyphs">25 - 49%</text>
<text x="1100.5" y="366.9" textLength="61.8" lengthAdjust="spacingAndGlyphs">50 - 74%</text>
<text x="1100" y="408.7" textLength="70.3" lengthAdjust="spacingAndGlyphs" fill="#fff">75 - 100%</text>
</g>
<line x1="1051.5" y1="427.4" x2="1152.5" y2="427.4" stroke="#000" stroke-width="1" stroke-dasharray="2,2"/>
<line x1="1051.5" y1="529.4" x2="1152.5" y2="529.4" stroke="#000" stroke-width="1" stroke-dasharray="2,2"/>
<g font-size="11.8" font-weight="bold" text-anchor="middle">
<text x="1100.4" y="440.5" textLength="56" lengthAdjust="spacingAndGlyphs">Numero</text>
<text x="1100.1" y="456.1" textLength="89.8" lengthAdjust="spacingAndGlyphs">segnalazioni</text>
<text x="1101.5" y="540.1" textLength="68.4" lengthAdjust="spacingAndGlyphs">Epicentro</text>
<text x="1101.2" y="556.7" textLength="87.5" lengthAdjust="spacingAndGlyphs">strumentale</text>
</g>
<g fill="none" stroke="#000" stroke-width="1.4">
<circle cx="1075.7" cy="467.3" r="3.6"/>
<circle cx="1124" cy="466.9" r="5.3"/>
<circle cx="1075.7" cy="502" r="8.4"/>
<circle cx="1124" cy="500.5" r="10.5"/>
</g>
<g font-size="12" text-anchor="middle">
<text x="1076" y="484.5" textLength="19" lengthAdjust="spacingAndGlyphs">1-2</text>
<text x="1124.5" y="484.5" textLength="19.5" lengthAdjust="spacingAndGlyphs">3-9</text>
<text x="1077" y="524.9" textLength="34.6" lengthAdjust="spacingAndGlyphs">10-49</text>
<text x="1125.7" y="524.9" textLength="25.8" lengthAdjust="spacingAndGlyphs">⩾50</text>
</g>
<path d="M1099.00,569.50 L1101.09,575.93 L1107.84,575.93 L1102.38,579.90 L1104.47,586.32 L1099.00,582.35 L1093.53,586.32 L1095.62,579.90 L1090.16,575.93 L1096.91,575.93 Z" fill="none" stroke="#000" stroke-width="1"/>
</g>

<!-- INGV logo -->
<g>
<defs>
<linearGradient id="gblue" x1="0" y1="0" x2="1" y2="1"><stop offset="0" stop-color="#35b3dc"/><stop offset="0.55" stop-color="#1a7eb0"/><stop offset="1" stop-color="#0a4f80"/></linearGradient>
<clipPath id="globeclip"><circle cx="132" cy="78" r="30"/></clipPath>
</defs>
<circle cx="132" cy="78" r="30" fill="url(#gblue)"/>
<g clip-path="url(#globeclip)">
<polygon fill="#c9b6cf" points="150,52 165,60 165,100 152,100 146,70"/>
<polygon fill="#2aa040" points="135.9,60.6 141.8,48 152,52 150.5,57 138.5,60.3"/>
<polygon fill="#e0152a" points="136.5,60.9 150.5,56.6 151.2,64.6 143.8,63.3"/>
<polygon fill="#c9b6cf" points="151.2,56.6 157.1,58 163,71.9 151.2,65.3"/>
<polygon fill="#2aa040" points="137.9,62.6 150.5,65.3 145.2,71.2"/>
<polygon fill="#f2e020" points="135.2,62 145.2,71.9 143.8,73.9 135.2,73.9"/>
<polygon fill="#f2e020" points="145.8,71.9 151.2,65.9 160,74.6 151.2,83.9"/>
<polygon fill="#c9b6cf" points="160,73.2 163,79.9 161,89.2 153.1,94.5 151.2,84.5"/>
<polygon fill="#e0152a" points="135.2,74.6 144.5,73.2 151.2,84.5 134.5,89.2"/>
<polygon fill="#22963a" points="134.5,89.8 151.2,85.2 153.8,98.5 150,110 133.2,110"/>
<polygon fill="#e0152a" points="153.8,94.5 157.8,92.5 154.5,97.2"/>
</g>
<g fill="none" stroke="#fff" stroke-width="0.8" clip-path="url(#globeclip)" opacity="0.95">
<path d="M135.2,61.3 Q133.5,85 132.2,108"/>
<path d="M135.2,61.3 Q120,75 111,100"/>
<path d="M135.2,61.3 Q115,63 102,79"/>
<path d="M135.2,61.3 L127.9,48"/>
<path d="M135.2,61.3 Q150,75 153.8,98"/>
<path d="M135.2,61.3 Q150,62 162,72"/>
<path d="M135.2,61.3 L141.8,48"/>
<ellipse cx="134" cy="61.5" rx="15.5" ry="12"/>
<ellipse cx="132" cy="64" rx="26" ry="25"/>
</g>
<g fill="#3d3d3d" font-size="13.4" font-weight="bold">
<text x="169.8" y="75.4" textLength="88.9" lengthAdjust="spacingAndGlyphs">ISTITUTO NAZIONALE</text>
<text x="169.8" y="89.5" textLength="135.7" lengthAdjust="spacingAndGlyphs">DI GEOFISICA E VULCANOLOGIA</text>
</g>
</g>
<!-- haisentito logo -->
<g>
<defs>
<linearGradient id="gtri" x1="0" y1="0" x2="1" y2="0"><stop offset="0" stop-color="#1760b0"/><stop offset="1" stop-color="#0a98e0"/></linearGradient>
<path id="arcp" d="M1132.4,935.4 A42.5,42.5 0 1 1 1131.3,894.9"/>
</defs>
<circle cx="1094.5" cy="916.1" r="32.3" fill="#1c1c1c"/>
<circle cx="1094.5" cy="916.1" r="17.9" fill="none" stroke="#e2141f" stroke-width="6.6"/>
<circle cx="1094.5" cy="916.1" r="8.1" fill="#e2141f"/>
<path d="M1099.6,916 L1128,901.5 Q1131,900 1131,903.5 L1131,929.5 Q1131,933 1128,931.8 Z" fill="url(#gtri)"/>
<circle cx="1143.6" cy="916.7" r="9.8" fill="#e2141f"/>
<text x="1143.6" y="916.7" font-size="13" font-weight="bold" fill="#fff" text-anchor="middle" transform="rotate(90 1143.6 916.7) translate(0 4.5)">?</text>
<text font-size="18" font-weight="bold" fill="#111"><textPath href="#arcp" textLength="224" lengthAdjust="spacingAndGlyphs"><tspan fill="#e2141f">www.</tspan>haisentitoilterremoto<tspan fill="#e2141f">.it</tspan></textPath></text>
</g>

<!-- frame -->
<g>
<rect x="73.5" y="25.5" width="1108" height="971.5" fill="none" stroke="#000" stroke-width="1"/>
<g fill="#000">
<rect x="83" y="26" width="209.5" height="9"/>
<rect x="547.5" y="26" width="255" height="9"/>
<rect x="1057.5" y="26" width="113.5" height="9"/>
<rect x="83" y="987" width="209.5" height="10"/>
<rect x="547.5" y="987" width="255" height="10"/>
<rect x="1057.5" y="987" width="113.5" height="10"/>
<rect x="74" y="141.5" width="9" height="338"/>
<rect x="74" y="803.5" width="9" height="183.5"/>
<rect x="1171" y="141.5" width="10" height="338"/>
<rect x="1171" y="803.5" width="10" height="183.5"/>
</g>
<rect x="83" y="35" width="1088" height="952" fill="none" stroke="#000" stroke-width="1"/>
<line x1="74" y1="35" x2="83" y2="35" stroke="#000"/>
<line x1="1171" y1="35" x2="1181" y2="35" stroke="#000"/>
<line x1="74" y1="987" x2="83" y2="987" stroke="#000"/>
<line x1="1171" y1="987" x2="1181" y2="987" stroke="#000"/>
</g>
<!-- axis labels -->
<g font-size="22.5" fill="#000" text-anchor="middle">
<text x="292.5" y="16.8">12°30'</text>
<text x="547.5" y="16.8">15°00'</text>
<text x="802.5" y="16.8">17°30'</text>
<text x="1057.5" y="16.8">20°00'</text>
<text x="292.5" y="1023.5">12°30'</text>
<text x="547.5" y="1023.5">15°00'</text>
<text x="802.5" y="1023.5">17°30'</text>
<text x="1057.5" y="1023.5">20°00'</text>
</g>
<g font-size="22.5" fill="#000" text-anchor="end">
<text x="64" y="150.2">42°30'</text>
<text x="64" y="488.2">40°00'</text>
<text x="64" y="812.2">37°30'</text>
</g>
<g font-size="22.5" fill="#000">
<text x="1191" y="150.2">42°30'</text>
<text x="1191" y="488.2">40°00'</text>
<text x="1191" y="812.2">37°30'</text>
</g>
</svg>
</body></html>
